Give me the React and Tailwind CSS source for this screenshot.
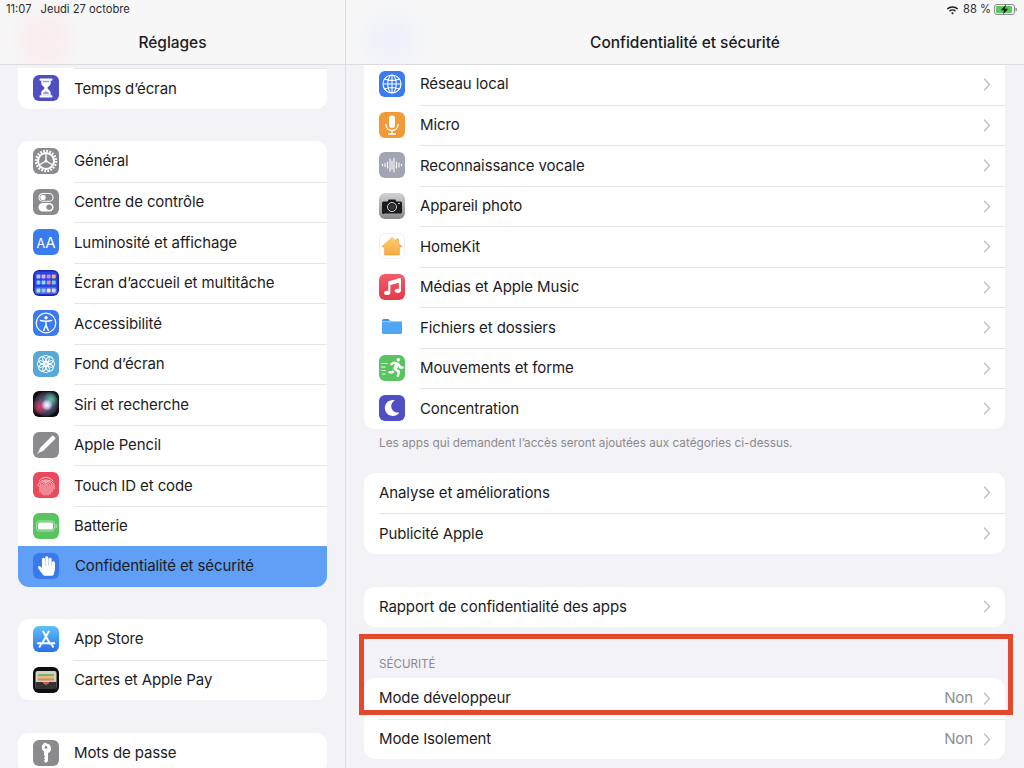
import React from "react";
import { FaHandPaper, FaRunning, FaMoon, FaMusic } from "react-icons/fa";

const Box = ({ bg, children }) => (
  <div className={`relative w-[26px] h-[26px] rounded-[6px] flex items-center justify-center shrink-0 overflow-hidden ${bg}`}>{children}</div>
);

const Hourglass = () => (
  <Box bg="bg-[#4f4fc4]">
    <svg width="26" height="26" viewBox="0 0 26 26">
      <rect x="6.500" y="3.500" width="13" height="2.200" rx="1" fill="#fff" />
      <rect x="6.500" y="20.300" width="13" height="2.200" rx="1" fill="#fff" />
      <path d="M8.300 5.500v2.500c0 2.800 3.200 3.500 3.200 5s-3.200 2.200-3.200 5v2.500h9.400V18c0-2.800-3.200-3.500-3.200-5s3.200-2.200 3.200-5V5.500z" fill="#fff" />
      <path d="M9.800 6v1.300h6.400V6zM13 16c-1.500.8-3 1.700-3.200 3.200h6.400C16 17.700 14.500 16.800 13 16z" fill="#4f4fc4" fillOpacity=".55" />
    </svg>
  </Box>
);

const Gear = () => (
  <Box bg="bg-[#8b8b8f]">
    <svg width="26" height="26" viewBox="0 0 26 26" fill="none" stroke="#fff">
      <circle cx="13" cy="13" r="10" strokeWidth="2.400" strokeDasharray="1.700 1.440" />
      <circle cx="13" cy="13" r="8" strokeWidth="2" />
      <path d="M13 13V6M13 13l-6 3.500M13 13l6 3.500" strokeWidth="1.400" />
      <circle cx="13" cy="13" r="1.500" fill="#fff" stroke="none" />
    </svg>
  </Box>
);

const Toggles = () => (
  <Box bg="bg-[#8b8b8f]">
    <svg width="26" height="26" viewBox="0 0 26 26">
      <rect x="6" y="4.500" width="14" height="7.800" rx="3.900" fill="none" stroke="#fff" strokeWidth="1.100" />
      <circle cx="10" cy="8.400" r="2.700" fill="#fff" />
      <rect x="5.500" y="14" width="15" height="8.500" rx="4.250" fill="#fff" />
      <circle cx="16.200" cy="18.250" r="2.800" fill="#8b8b8f" />
    </svg>
  </Box>
);

const AA = () => (
  <Box bg="bg-[#3b7bf0]">
    <span className="text-white text-[15px] font-normal leading-none tracking-[-0.1px] flex items-baseline">
      <span className="text-[12.500px]">A</span>A
    </span>
  </Box>
);

const HomeGrid = () => {
  const rows = [
    ["#b8c4ff", "#f0a8d8", "#b78cff", "#ffb070"],
    ["#7fd0ff", "#8fd8ff", "#ff7f9f", "#70d8b0"],
    ["#a8e8b0", "#8fc8ff", "#ffe0a0", "#d0dcff"],
  ];
  return (
    <Box bg="bg-[#1a24b0]">
      <svg width="26" height="26" viewBox="0 0 26 26">
        <rect x="1.500" y="1.500" width="23" height="23" rx="4" fill="#2a46e0" />
        <rect x="2" y="17" width="22" height="7" rx="2" fill="#4a66ea" />
        {rows.map((row, r) =>
          row.map((c, i) => (
            <rect key={`${r}-${i}`} x={3.500 + i * 5.100} y={[4.500, 10.500, 18.500][r]} width="3.900" height="3.900" rx="1" fill={c} />
          ))
        )}
      </svg>
    </Box>
  );
};

const Access = () => (
  <Box bg="bg-[#3b7bf0]">
    <svg width="26" height="26" viewBox="0 0 26 26" fill="none" stroke="#fff">
      <circle cx="13" cy="13" r="9.800" strokeWidth="1.200" />
      <circle cx="13" cy="7.800" r="1.700" fill="#fff" stroke="none" />
      <path d="M7.500 10.500c3.500 1 7.500 1 11 0M13 11.300v4M13 15l-2.300 5.500M13 15l2.300 5.500" strokeWidth="1.500" strokeLinecap="round" />
    </svg>
  </Box>
);

const Flower = () => (
  <Box bg="bg-[#55a8d8]">
    <svg width="26" height="26" viewBox="0 0 26 26" fill="none" stroke="#fff" strokeWidth="1">
      {[0, 45, 90, 135, 180, 225, 270, 315].map((a) => (
        <circle key={a} cx="13" cy="7.700" r="3.400" transform={`rotate(${a} 13 13)`} />
      ))}
      <circle cx="13" cy="13" r="3" fill="#fff" fillOpacity=".6" />
    </svg>
  </Box>
);

const Siri = () => (
  <Box bg="bg-[#0c0c10]">
    <svg width="26" height="26" viewBox="0 0 26 26">
      <defs>
        <radialGradient id="siriBase">
          <stop offset="0" stopColor="#7a6aa0" />
          <stop offset=".65" stopColor="#46465f" />
          <stop offset="1" stopColor="#20202a" />
        </radialGradient>
        <radialGradient id="siriRed">
          <stop offset="0" stopColor="#e03a68" stopOpacity=".95" />
          <stop offset="1" stopColor="#e03a68" stopOpacity="0" />
        </radialGradient>
        <radialGradient id="siriGreen">
          <stop offset="0" stopColor="#5ad8b0" stopOpacity=".85" />
          <stop offset="1" stopColor="#5ad8b0" stopOpacity="0" />
        </radialGradient>
        <radialGradient id="siriWhite">
          <stop offset="0" stopColor="#fff" />
          <stop offset=".5" stopColor="#dfe6ff" stopOpacity=".75" />
          <stop offset="1" stopColor="#dfe6ff" stopOpacity="0" />
        </radialGradient>
      </defs>
      <circle cx="13" cy="13" r="12.500" fill="url(#siriBase)" />
      <circle cx="7" cy="16" r="8.500" fill="url(#siriRed)" />
      <circle cx="18" cy="8" r="8" fill="url(#siriGreen)" />
      <circle cx="14" cy="14" r="6" fill="url(#siriWhite)" />
    </svg>
  </Box>
);

const Pencil = () => (
  <Box bg="bg-[#8b8b8f]">
    <svg width="26" height="26" viewBox="0 0 26 26">
      <path d="M19.500 3.500c1.500.7 2.500 1.800 3 3L10 19l-3.800 1.500-1.700 1.500-.3-.4 1.400-1.500L7 16z" fill="#fff" />
    </svg>
  </Box>
);

const Finger = () => (
  <Box bg="bg-[#ea4a5c]">
    <svg width="26" height="26" viewBox="0 0 26 26" fill="none" stroke="#ffd5da" strokeWidth=".9" strokeLinecap="round">
      <path d="M6 9c3.500-5 10.500-5 14 0" />
      <path d="M5 14c0-8 16-8 16 0v3" />
      <path d="M7 20v-6c0-6.500 12-6.500 12 0v6" />
      <path d="M9 22v-8c0-4.500 8-4.500 8 0v8" />
      <path d="M11 23v-9c0-2.500 4-2.500 4 0v9" />
      <path d="M13 23v-9.500" />
    </svg>
  </Box>
);

const Battery = () => (
  <Box bg="bg-[#5ac460]">
    <svg width="26" height="26" viewBox="0 0 26 26">
      <rect x="3.500" y="8" width="18" height="10" rx="2.800" fill="none" stroke="#a8e2ab" strokeWidth="1" />
      <rect x="5" y="9.500" width="15" height="7" rx="1.600" fill="#fff" />
      <rect x="22.500" y="11" width="1.300" height="4" rx=".6" fill="#a8e2ab" />
    </svg>
  </Box>
);

const Hand = () => (
  <Box bg="bg-[#3a78ee]">
    <FaHandPaper className="text-white w-[17px] h-[20px]" />
  </Box>
);

const AppStore = () => (
  <Box bg="bg-[linear-gradient(180deg,#5ec1f8,#2a6fe8)]">
    <svg width="26" height="26" viewBox="0 0 26 26" fill="none" stroke="#fff" strokeWidth="1.900" strokeLinecap="round">
      <path d="M15.800 5.500L9.300 17M10.200 5.500l6.800 12.200" />
      <path d="M4.800 17.300h11M18 17.300h3.400" />
      <path d="M18.300 17.800l1.700 3M7.800 18.800l-1.200 2" />
    </svg>
  </Box>
);

const Wallet = () => (
  <Box bg="bg-[#0e0e10]">
    <svg width="26" height="26" viewBox="0 0 26 26">
      <rect x="2.500" y="4" width="21" height="18" rx="2" fill="#d5d0c4" />
      <rect x="5" y="7" width="16" height="2.200" fill="#79b57a" />
      <rect x="5" y="9.200" width="16" height="2.200" fill="#e3c463" />
      <rect x="5" y="11.400" width="16" height="2.200" fill="#dc8a66" />
      <path d="M2.500 15h7.500c.8 1.800 2 2.500 3 2.500s2.200-.7 3-2.500h7.500v7h-21z" fill="#333336" />
      <path d="M10 15c.8 1.800 2 2.500 3 2.500s2.200-.7 3-2.500z" fill="#d9584a" />
    </svg>
  </Box>
);

const Key = () => (
  <Box bg="bg-[#8b8b8f]">
    <svg width="26" height="26" viewBox="0 0 26 26">
      <path fillRule="evenodd" fill="#fff" d="M13 3.500a5 5 0 0 1 2 9.600V21l-2 2-2.200-2 1.400-1.500-1.400-1.500 1.400-1.500-1.200-1.200v-3.700a5 5 0 0 1 2-9.100zm0 2.500a1.400 1.400 0 1 0 0 2.800 1.400 1.400 0 0 0 0-2.800z" />
    </svg>
  </Box>
);

const Globe = () => (
  <Box bg="bg-[#3b7bf0]">
    <svg width="26" height="26" viewBox="0 0 26 26" fill="none" stroke="#fff" strokeWidth="1.100">
      <circle cx="13" cy="13" r="9" />
      <ellipse cx="13" cy="13" rx="4.200" ry="9" />
      <path d="M13 4v18M4 13h18M5.500 8c4.500 1.800 10.500 1.800 15 0M5.500 18c4.500-1.800 10.500-1.800 15 0" />
    </svg>
  </Box>
);

const Mic = () => (
  <Box bg="bg-[#f09a38]">
    <svg width="26" height="26" viewBox="0 0 26 26" fill="none" stroke="#fff" strokeWidth="1.300" strokeLinecap="round">
      <rect x="10" y="3.500" width="6" height="12.500" rx="3" fill="#fff" stroke="none" />
      <path d="M7 12.500c0 8 12 8 12 0M13 18.500V22M9.500 22h7" />
    </svg>
  </Box>
);

const Wave = () => {
  const bars = [[3.500, 1.500], [6, 3], [8.500, 6], [11, 12], [13, 8], [15, 14], [17.500, 6], [20, 4], [22.500, 1.500]];
  return (
    <Box bg="bg-[#a1a5b4]">
      <svg width="26" height="26" viewBox="0 0 26 26" stroke="#fff" strokeWidth="1.100" strokeLinecap="round">
        {bars.map(([x, h]) => (
          <line key={x} x1={x} x2={x} y1={13 - h / 2} y2={13 + h / 2} />
        ))}
      </svg>
    </Box>
  );
};

const Camera = () => (
  <Box bg="bg-[linear-gradient(180deg,#d2d2d4,#8a8a8c)]">
    <svg width="26" height="26" viewBox="0 0 26 26">
      <path d="M4.500 8.500h4l1.200-2h6.600l1.200 2h4a1.500 1.500 0 0 1 1.500 1.500v9a1.500 1.500 0 0 1-1.500 1.500h-16A1.500 1.500 0 0 1 3 19v-9a1.500 1.500 0 0 1 1.500-1.500z" fill="#1a1a1c" />
      <circle cx="13" cy="14" r="4.500" fill="none" stroke="#d8d8da" strokeWidth="1" />
      <circle cx="13" cy="14" r="2.800" fill="#333" />
      <circle cx="20" cy="10.500" r=".8" fill="#eee" />
    </svg>
  </Box>
);

const Home = () => (
  <Box bg="bg-white border border-[#f0f0f2]">
    <svg width="24" height="24" viewBox="0 0 24 24">
      <defs>
        <linearGradient id="hk" x1="0" y1="0" x2="0" y2="1">
          <stop offset="0" stopColor="#fbd070" />
          <stop offset="1" stopColor="#f7a840" />
        </linearGradient>
      </defs>
      <path d="M12 3.500l4 3.500V5h2.500v4.200L22 12.500l-1 1-1.500-1.300V21h-15v-8.800L3 13.500l-1-1z" fill="url(#hk)" stroke="#f09030" strokeWidth=".5" />
    </svg>
  </Box>
);

const Music = () => (
  <Box bg="bg-[linear-gradient(180deg,#f25c68,#e23c4c)]">
    <FaMusic className="text-white w-[17px] h-[17px]" />
  </Box>
);

const Folder = () => (
  <Box bg="bg-white">
    <svg width="26" height="26" viewBox="0 0 26 26">
      <path d="M3 6.500a1.500 1.500 0 0 1 1.500-1.500h5l2 2.200H3z" fill="#3d94ec" />
      <path d="M3 8h20v10.500a1.500 1.500 0 0 1-1.500 1.500h-17A1.500 1.500 0 0 1 3 18.500z" fill="#4ea6f4" />
      <rect x="3" y="7" width="20" height="1.200" fill="#8ccbfa" />
    </svg>
  </Box>
);

const Fitness = () => (
  <Box bg="bg-[#5ac460]">
    <svg width="26" height="26" viewBox="0 0 26 26" className="absolute left-0 top-0" stroke="#fff" strokeWidth="1.200" strokeLinecap="round">
      <path d="M3 8.500h5M2.500 12h3.500M3 15.500h3M3.500 19h2.500" />
    </svg>
    <FaRunning className="text-white w-[16px] h-[19px] ml-[7px]" />
  </Box>
);

const Moon = () => (
  <Box bg="bg-[#4f4fc4]">
    <FaMoon className="text-white w-[16px] h-[16px]" />
  </Box>
);

const Chevron = () => (
  <svg width="8" height="13" viewBox="0 0 8 13" fill="none" stroke="#c4c4c7" strokeWidth="1.600" strokeLinecap="round" strokeLinejoin="round" className="shrink-0">
    <path d="M1.500 1.200L6.500 6.500 1.500 11.800" />
  </svg>
);

const SideRow = ({ icon: I, label, first, selected, topLine }) => (
  <div className={`h-[40.5px] flex items-center pl-[15px] ${selected ? "bg-[#5f9ff6]" : ""}`}>
    <I />
    <div className={`ml-[15px] flex-1 h-full flex items-center text-[15px] tracking-[-0.11px] text-[#1c1c1e] ${selected ? "pl-px" : ""} ${first && !topLine ? "" : "border-t border-[#e6e6ea]"} ${selected ? "border-t-0" : ""}`}>
      {label}
    </div>
  </div>
);

const SideCard = ({ items, topLine, className = "" }) => (
  <div className={`mx-[18px] bg-white rounded-[11px] overflow-hidden shrink-0 ${className}`}>
    {items.map(([I, label, sel], i) => (
      <SideRow key={label} icon={I} label={label} first={i === 0} selected={sel} topLine={topLine} />
    ))}
  </div>
);

const MainRow = ({ icon: I, label, value, first }) => (
  <div className="h-[40.5px] flex items-center pl-[15px]">
    {I && <I />}
    <div className={`flex-1 h-full flex items-center justify-between pr-[14px] text-[15px] tracking-[-0.11px] text-[#1c1c1e] ${I ? "ml-[15px]" : ""} ${first ? "" : "border-t border-[#e6e6ea]"}`}>
      <span>{label}</span>
      <span className="flex items-center gap-[10px]">
        {value && <span className="text-[#8e8e93]">{value}</span>}
        <Chevron />
      </span>
    </div>
  </div>
);

const MainCard = ({ items, className = "" }) => (
  <div className={`ml-[18px] mr-[19px] bg-white rounded-[11px] overflow-hidden shrink-0 ${className}`}>
    {items.map(([I, label, value], i) => (
      <MainRow key={label} icon={I} label={label} value={value} first={i === 0} />
    ))}
  </div>
);

export default function App() {
  return (
    <div className="relative w-[1024px] h-[768px] overflow-hidden flex bg-[#f2f2f7] font-['Inter','Liberation_Sans',sans-serif]">
      <div className="w-[346px] h-full flex flex-col border-r border-[#dedee2] shrink-0">
        <div className="relative h-[65px] shrink-0 bg-[#f7f7f8] border-b border-[#dcdcde] overflow-hidden">
          <div className="absolute left-[20px] top-[10px] w-[50px] h-[60px] rounded-full bg-[#ffd9dc] opacity-35 blur-[12px]" />
          <div className="relative h-[19px] flex items-center pl-[6px] gap-[9px] text-[11.200px] text-[#2c2c2e]">
            <span>11:07</span>
            <span>Jeudi 27 octobre</span>
          </div>
          <div className="relative text-center text-[15.500px] tracking-[-0.03px] font-medium text-[#1c1c1e] mt-[12px]">Réglages</div>
        </div>
        <div className="flex-1 overflow-hidden flex flex-col pt-[3px]">
          <SideCard topLine className="rounded-t-none" items={[[Hourglass, "Temps d’écran"]]} />
          <SideCard
            className="mt-[32.500px]"
            items={[
              [Gear, "Général"],
              [Toggles, "Centre de contrôle"],
              [AA, "Luminosité et affichage"],
              [HomeGrid, "Écran d’accueil et multitâche"],
              [Access, "Accessibilité"],
              [Flower, "Fond d’écran"],
              [Siri, "Siri et recherche"],
              [Pencil, "Apple Pencil"],
              [Finger, "Touch ID et code"],
              [Battery, "Batterie"],
              [Hand, "Confidentialité et sécurité", true],
            ]}
          />
          <SideCard className="mt-[32.500px]" items={[[AppStore, "App Store"], [Wallet, "Cartes et Apple Pay"]]} />
          <SideCard className="mt-[33px]" items={[[Key, "Mots de passe"]]} />
        </div>
      </div>

      <div className="flex-1 h-full flex flex-col min-w-0">
        <div className="relative z-10 h-[65px] shrink-0 bg-[#f7f7f8] border-b border-[#dcdcde] overflow-hidden">
          <div className="absolute left-[20px] top-[15px] w-[50px] h-[50px] rounded-full bg-[#dbe6fb] opacity-40 blur-[12px]" />
          <div className="relative h-[19px] flex items-center justify-end pr-[7px] text-[11.200px] text-[#2c2c2e]">
            <svg width="13" height="10" viewBox="0 0 13 10" className="mr-[4px]">
              <path d="M.8 3.600a8.200 8.200 0 0 1 11.400 0l-1 1a6.800 6.800 0 0 0-9.400 0zM3 5.800a5 5 0 0 1 7 0l-1 1a3.600 3.600 0 0 0-5 0zM5.100 7.900a2 2 0 0 1 2.800 0L6.500 9.400z" fill="#1c1c1e" />
            </svg>
            <span>88 %</span>
            <svg width="23" height="11" viewBox="0 0 23 11" className="ml-[3px]">
              <rect x=".5" y=".5" width="20" height="10" rx="2.500" fill="none" stroke="#8a8a8e" />
              <rect x="2" y="2" width="16" height="7" rx="1.200" fill="#5ac85f" />
              <rect x="21.500" y="3.700" width="1.300" height="3.600" rx=".6" fill="#8a8a8e" />
              <path d="M12 .5L6.800 6.300h3.100L9 10.500l5.200-5.800h-3.100z" fill="#1c1c1e" />
            </svg>
          </div>
          <div className="relative text-center text-[15.500px] tracking-[-0.03px] font-medium text-[#1c1c1e] mt-[12px]">Confidentialité et sécurité</div>
        </div>
        <div className="flex-1 overflow-hidden flex flex-col">
          <MainCard
            className="rounded-t-none -mt-px"
            items={[
              [Globe, "Réseau local"],
              [Mic, "Micro"],
              [Wave, "Reconnaissance vocale"],
              [Camera, "Appareil photo"],
              [Home, "HomeKit"],
              [Music, "Médias et Apple Music"],
              [Folder, "Fichiers et dossiers"],
              [Fitness, "Mouvements et forme"],
              [Moon, "Concentration"],
            ]}
          />
          <div className="ml-[33px] mt-[7px] text-[11.750px] leading-[15px] text-[#8a8a8e]">
            Les apps qui demandent l’accès seront ajoutées aux catégories ci-dessus.
          </div>
          <MainCard className="mt-[22px]" items={[[null, "Analyse et améliorations"], [null, "Publicité Apple"]]} />
          <MainCard className="mt-[33px]" items={[[null, "Rapport de confidentialité des apps"]]} />
          <div className="ml-[33px] mt-[30px] h-[21px] text-[11.600px] leading-[14px] text-[#8a8a8e]">SÉCURITÉ</div>
          <MainCard items={[[null, "Mode développeur", "Non"], [null, "Mode Isolement", "Non"]]} />
        </div>
      </div>

      <div className="absolute left-[359px] top-[634px] w-[654px] h-[81px] border-[5px] border-[#e5492b] pointer-events-none" />
    </div>
  );
}
